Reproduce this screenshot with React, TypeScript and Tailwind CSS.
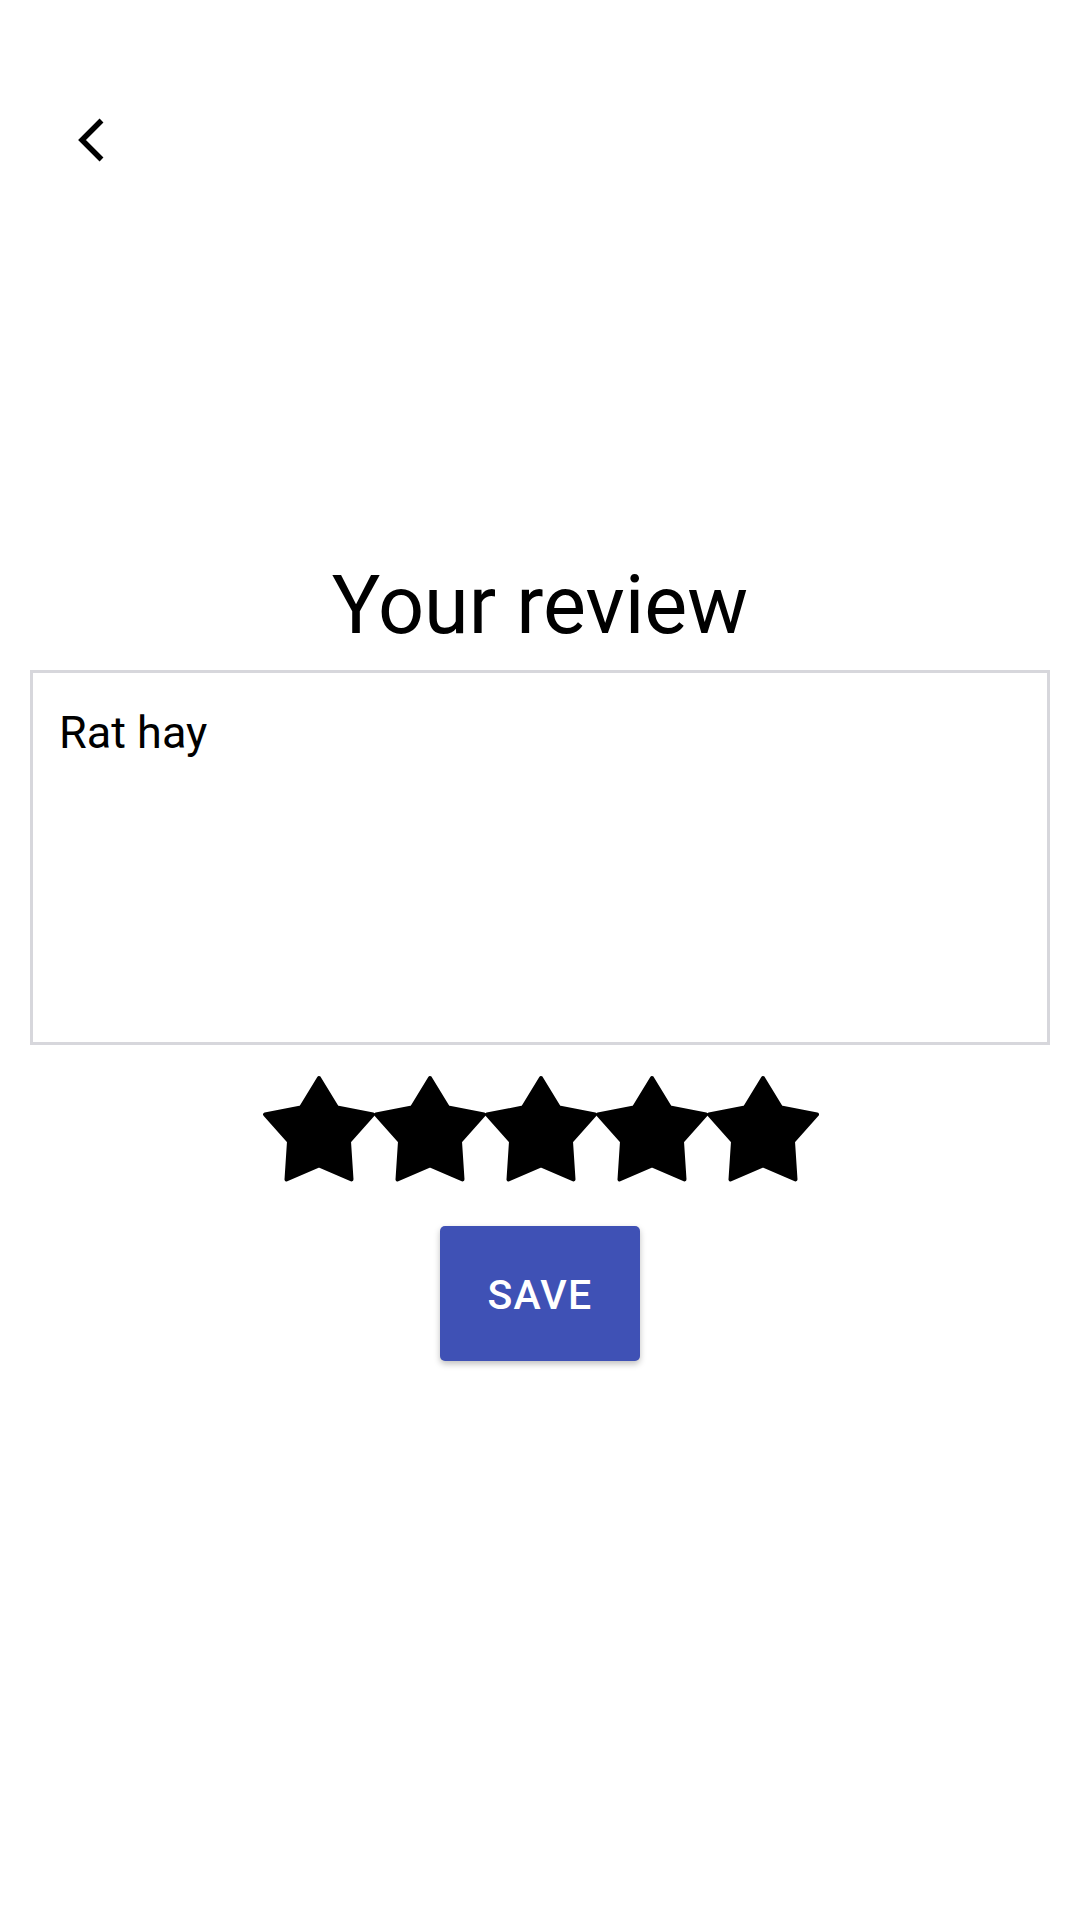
import React from "react";

// star outline measured from the reference, in px (left tip = 0, top tip = 0)
const STAR_POINTS =
  "56,2 74,31.5 110,38.5 86,65.5 88.5,103.5 56,89.5 23.5,103.5 26,65.5 2,38.5 38,31.5";

function Star() {
  return (
    <svg
      viewBox="0 0 111 108"
      className="w-[111px] h-[108px] shrink-0 overflow-visible"
    >
      <polygon
        points={STAR_POINTS}
        fill="#000"
        stroke="#000"
        strokeWidth={4}
        strokeLinejoin="round"
      />
    </svg>
  );
}

export default function App() {
  return (
    <div className="w-[1080px] h-[1920px] bg-white font-['Roboto','Liberation_Sans',sans-serif] text-black">
      {/* Header with back chevron */}
      <div className="pt-[117px] pl-[76px]">
        <button className="block cursor-pointer">
          <svg viewBox="0 0 30 46" className="w-[30px] h-[46px]">
            <polyline
              points="25.5,3.5 6,23 25.5,42.5"
              fill="none"
              stroke="#000"
              strokeWidth={5.5}
            />
          </svg>
        </button>
      </div>

      {/* Review form */}
      <div className="mt-[402px] flex flex-col items-center">
        <h1 className="text-[81px] leading-[81px] font-normal">Your review</h1>

        <div className="mt-[24px] w-[1020px] h-[375px] border-[3px] border-[#d7d7dc] pt-[37px] pl-[26px]">
          <p className="text-[45px] leading-[45px]">Rat hay</p>
        </div>

        <div className="mt-[31px] flex justify-center">
          {[0, 1, 2, 3, 4].map((i) => (
            <Star key={i} />
          ))}
        </div>

        <button className="mt-[42px] w-[200px] h-[135px] rounded-[5px] bg-[#3f51b5] text-white text-[41px] leading-[41px] font-medium tracking-[0.03em] shadow-[0_3px_6px_rgba(0,0,0,0.25)] flex items-center justify-center pt-[4px]">
          SAVE
        </button>
      </div>
    </div>
  );
}
